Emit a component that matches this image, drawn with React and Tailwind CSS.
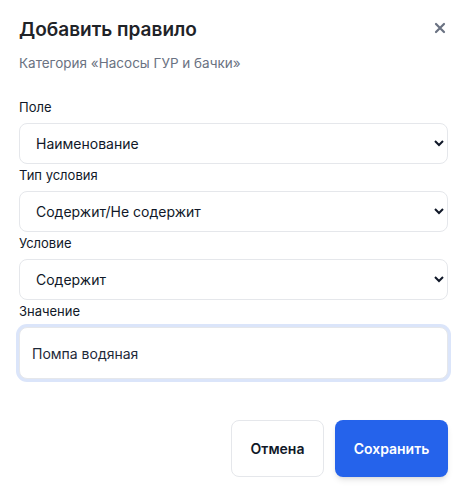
import React, { useState } from 'react';

function Field({ label, children }) {
  return (
    <div>
      <label className="block text-[13px] leading-4 text-gray-900 mb-2">{label}</label>
      {children}
    </div>
  );
}

const selectCls =
  "w-full h-[41px] rounded-lg border border-gray-200 bg-white px-3 text-[14px] text-gray-900 font-['Inter',sans-serif]";

export default function App() {
  const [field, setField] = useState('name');
  const [type, setType] = useState('contains');
  const [cond, setCond] = useState('contains');
  const [value, setValue] = useState('Помпа водяная');

  return (
    <div className="w-[469px] h-[497px] bg-white pl-[19px] pr-[21px] pt-[18px] font-['Inter',sans-serif]">
      <div className="flex items-start justify-between">
        <h2 className="text-[19px] leading-[24px] font-semibold text-[#1f2328]">Добавить правило</h2>
        <button className="mr-[2px] mt-[4px] text-gray-500">
          <svg width="12" height="12" viewBox="0 0 12 12" fill="none" stroke="currentColor" strokeWidth="2.2" strokeLinecap="round">
            <path d="M2 2l8 8M10 2l-8 8" />
          </svg>
        </button>
      </div>
      <p className="mt-[13px] text-[13.5px] leading-4 text-gray-500">Категория «Насосы ГУР и бачки»</p>

      <div className="mt-[28px] flex flex-col gap-[3px]">
        <Field label="Поле">
          <select value={field} onChange={(e) => setField(e.target.value)} className={selectCls}>
            <option value="name">Наименование</option>
            <option value="article">Артикул</option>
          </select>
        </Field>
        <Field label="Тип условия">
          <select value={type} onChange={(e) => setType(e.target.value)} className={selectCls}>
            <option value="contains">Содержит/Не содержит</option>
            <option value="equals">Равно/Не равно</option>
          </select>
        </Field>
        <Field label="Условие">
          <select value={cond} onChange={(e) => setCond(e.target.value)} className={selectCls}>
            <option value="contains">Содержит</option>
            <option value="not">Не содержит</option>
          </select>
        </Field>
        <Field label="Значение">
          <input
            value={value}
            onChange={(e) => setValue(e.target.value)}
            className="w-full h-[52px] rounded-lg border border-gray-200 bg-white px-3 text-[14px] text-gray-800 ring-[3px] ring-[#dbe5fa] outline-none"
          />
        </Field>
      </div>

      <div className="mt-[41px] flex justify-end gap-[11px]">
        <button className="h-[57px] w-[93px] rounded-lg border border-gray-200 bg-white text-[14px] font-semibold text-gray-900">
          Отмена
        </button>
        <button className="h-[57px] w-[113px] rounded-lg bg-[#2563eb] text-[14px] font-semibold text-white shadow-md">
          Сохранить
        </button>
      </div>
    </div>
  );
}
